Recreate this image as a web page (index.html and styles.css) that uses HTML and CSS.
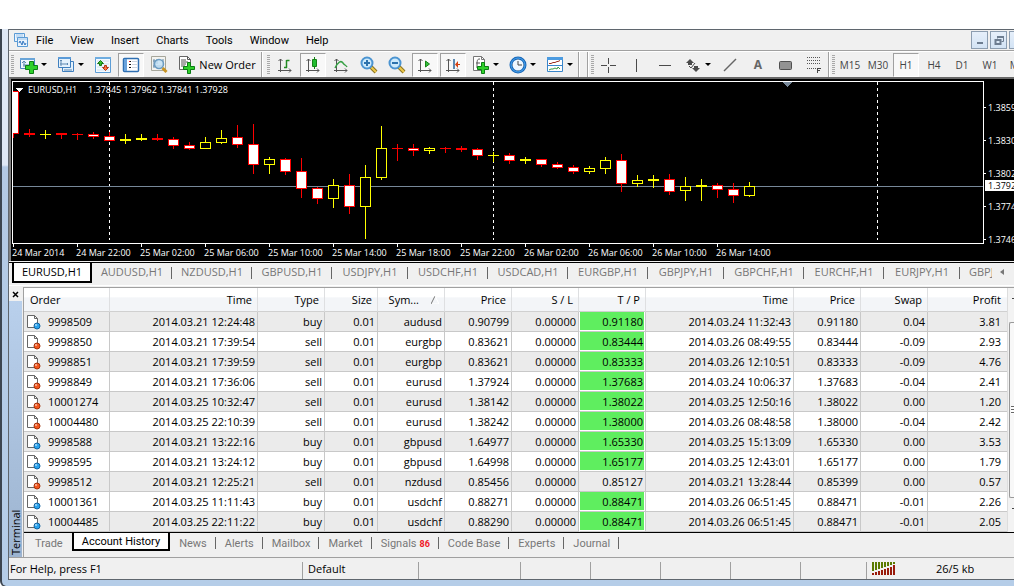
FILE: index.html
```html
<!DOCTYPE html>
<html lang="en">
<head>
<meta charset="utf-8">
<title>Trading terminal</title>
<link rel="stylesheet" href="styles.css">
</head>
<body>
<div class="window">
<div class="frame">
  <header class="menubar">
    <svg class="app-icon" width="16" height="16" viewBox="0 0 16 16"><g fill="#e9f3fd" stroke="#5b9bd5"><path d="M1.500 1.500h10v8h-10z"/><path d="M3 5h7M3 3h7" stroke="#9cc4ea"/><path d="M4.500 5.500h10v9h-10z"/><path d="M5 7h9" stroke="#9cc4ea"/><path d="M6 11l1-2 2 4 1-4 2 4 1-2" fill="none" stroke="#3577c0"/></g></svg>
    <nav class="menu">
      <button>File</button><button>View</button><button>Insert</button><button>Charts</button><button>Tools</button><button>Window</button><button>Help</button>
    </nav>
    <div class="winbtns">
      <button aria-label="Minimize"><svg width="16" height="16" viewBox="0 0 16 16"><path d="M5 10h6v2H5z" fill="#6d7d90"/></svg></button>
      <button aria-label="Restore"><svg width="16" height="16" viewBox="0 0 16 16"><path d="M6.500 6.500V4.500h6v5h-2" fill="none" stroke="#6d7d90"/><path d="M6 4h7v2H6z" fill="#6d7d90"/><path d="M4.500 8h5v4h-5z" fill="none" stroke="#6d7d90" stroke-width="2"/></svg></button>
      <button aria-label="Close" class="cut"></button>
    </div>
  </header>

  <div class="toolbar">
    <i class="grip"></i>
    <button class="drop" aria-label="New chart"><svg width="18" height="18" viewBox="1 0 18 18"><path d="M1.500 2.500h14v10h-14z" fill="#eef6fd" stroke="#4b86bd"/><path d="M1 2h15v2H1z" fill="#6aa5d8"/><path d="M5 5v6M3 7l2-2 2 2M4 9h7" stroke="#5c87b0" fill="none"/><path d="M10.500 5.500h4v4h4v4h-4v4h-4v-4h-4v-4h4z" fill="#2fd02a" stroke="#0b7d15"/></svg></button>
    <button class="drop" aria-label="Profiles"><svg width="18" height="18" viewBox="0 0 18 18"><g fill="#e4f1fc" stroke="#3f7fbe"><path d="M5.500 5.500h11v10h-11z"/><path d="M1.500 1.500h12v10h-12z"/></g><path d="M1 1h13v2H1z" fill="#5b9bd8"/><path d="M4 4v6M3 5l1-1 1 1M3 8h8M10 7l1 1-1 1M7 14h8" stroke="#5c87b0" fill="none"/></svg></button>
    <button aria-label="Market Watch"><svg width="16" height="16" viewBox="0 0 16 16"><path d="M.5.5h15v15H.5z" fill="#f4faff" stroke="#5c9dd6"/><path d="M0 0h16v2H0z" fill="#6fade0"/><path d="M2 4h12M2 7h12M2 10h12M2 13h12" stroke="#cfe0ee"/><path d="M5.500 3.500l3 3h-2v2h-2v-2h-2z" fill="#35c12c" stroke="#167514"/><path d="M10.500 13.500l-3-3h2v-2h2v2h2z" fill="#ff7542" stroke="#b33514"/></svg></button>
    <button class="on" aria-label="Navigator"><svg width="18" height="16" viewBox="0 0 18 16"><rect x="1.500" y="1.500" width="15" height="13" rx="1" fill="#fff" stroke="#2f6fb2" stroke-width="1.500"/><path d="M2 2h3v12H2z" fill="#69a2dc"/><path d="M7 4.500h2M7 7.500h2M7 10.500h2" stroke="#111"/><path d="M7 4.500h1" stroke="#e22"/><path d="M10 4.500h5M10 7.500h5M10 10.500h5" stroke="#ccd5df"/></svg></button>
    <button aria-label="Data Window"><svg width="18" height="18" viewBox="0 0 18 18"><path d="M1.500.5h14v14h-14z" fill="#f3f3f0" stroke="#a6a69b"/><path d="M4 3v9M3 5h3M7 3v5M13 3v7M3 10h10" stroke="#6689a6"/><circle cx="9" cy="8" r="4.500" fill="#c2e1f6" fill-opacity=".8" stroke="#6b9cc2" stroke-width="1.500"/><path d="M12.500 12l4 4" stroke="#c79322" stroke-width="3"/></svg></button>
    <button class="order"><svg width="18" height="18" viewBox="0 0 18 18"><path d="M1.500.5h8l3 3v10h-11z" fill="#fff" stroke="#666"/><path d="M9.500.5v3h3M3 4h5M3 6h7M3 8h5M3 10h4" stroke="#555" fill="none"/><path d="M9.500 6.500h3v4h4v3h-4v4h-3v-4h-4v-3h4z" fill="#2fd02a" stroke="#0b7d15"/></svg>New Order</button>
    <i class="sep"></i><i class="grip g2"></i>
    <button aria-label="Bar Chart"><svg width="16" height="16" viewBox="0 0 16 16"><path d="M3.500 2v13M1.500 4l2-2 2 2M1 13.500h13M12 11.500l2 2-2 2" stroke="#555" fill="none"/><path d="M9.500 3v8M9.500 3.500h3M7 10.500h3" stroke="#228a22" stroke-width="1.500" fill="none"/></svg></button>
    <button class="on" aria-label="Candlesticks"><svg width="16" height="16" viewBox="0 0 16 16"><path d="M3.500 2v13M1.500 4l2-2 2 2M1 13.500h13M12 11.500l2 2-2 2" stroke="#555" fill="none"/><path d="M9.500 0v12" stroke="#168316"/><path d="M7.500 2.500h4v7h-4z" fill="#21bd30" stroke="#168316"/></svg></button>
    <button aria-label="Line Chart"><svg width="16" height="16" viewBox="0 0 16 16"><path d="M3.500 2v13M1.500 4l2-2 2 2M1 13.500h13M12 11.500l2 2-2 2" stroke="#555" fill="none"/><path d="M2 11c3-6 6-8 8-5 1 2 3 2 4 4" stroke="#36a044" stroke-width="1.500" fill="none"/></svg></button>
    <button aria-label="Zoom In"><svg width="18" height="18" viewBox="0 0 18 18"><path d="M10 10l6 6" stroke="#8b7422" stroke-width="4"/><path d="M11 11l5 5" stroke="#efc94a" stroke-width="2"/><circle cx="7" cy="7" r="5.500" fill="#cdeafc" stroke="#4b94d1" stroke-width="2"/><path d="M4 7h6M7 4v6" stroke="#2c72ad" stroke-width="2"/></svg></button>
    <button aria-label="Zoom Out"><svg width="18" height="18" viewBox="0 0 18 18"><path d="M10 10l6 6" stroke="#8b7422" stroke-width="4"/><path d="M11 11l5 5" stroke="#efc94a" stroke-width="2"/><circle cx="7" cy="7" r="5.500" fill="#cdeafc" stroke="#4b94d1" stroke-width="2"/><path d="M4 7h6" stroke="#2c72ad" stroke-width="2"/></svg></button>
    <button class="on" aria-label="Auto Scroll"><svg width="16" height="16" viewBox="0 0 16 16"><path d="M3.500 2v13M1.500 4l2-2 2 2M1 13.500h13M12 11.500l2 2-2 2" stroke="#555" fill="none"/><path d="M8.500 4l4 3-4 3z" fill="#32bd3b" stroke="#168316"/></svg></button>
    <button class="on" aria-label="Chart Shift"><svg width="16" height="16" viewBox="0 0 16 16"><path d="M3.500 2v13M1.500 4l2-2 2 2M1 13.500h13M12 11.500l2 2-2 2" stroke="#555" fill="none"/><path d="M9 2v10" stroke="#2a6599" stroke-width="1.500"/><path d="M15 7.500h-4" stroke="#c33b0d"/><path d="M13 4v7l-3-3.500z" fill="#d8410f"/></svg></button>
    <button class="drop" aria-label="Indicators"><svg width="18" height="18" viewBox="0 0 18 18"><path d="M1.500.5h8l3 3v11h-11z" fill="#fff" stroke="#777"/><path d="M9.500.5v3h3" stroke="#777" fill="none"/><path d="M8 3c-3 0-3 1-3 9M4 7h4" stroke="#555" fill="none"/><path d="M9.500 6.500h3v4h4v3h-4v4h-3v-4h-4v-3h4z" fill="#2fd02a" stroke="#0b7d15"/></svg></button>
    <button class="drop" aria-label="Periods"><svg width="18" height="18" viewBox="0 0 18 18"><circle cx="9" cy="9" r="7" fill="#eef7ff" stroke="#1767b8" stroke-width="3"/><circle cx="9" cy="9" r="7" fill="none" stroke="#4ba4ee"/><path d="M9 5v4h4" stroke="#444" fill="none"/><path d="M9 3v1M9 14v1M3 9h1M14 9h1" stroke="#888"/></svg></button>
    <button class="drop" aria-label="Templates"><svg width="18" height="16" viewBox="0 0 18 16"><path d="M1.500.5h15v14h-15z" fill="#fff" stroke="#3a86ca"/><path d="M1 0h16v3H1z" fill="#4c9be0"/><path d="M2 8.500h14" stroke="#3a86ca"/><path d="M3 6.500h2l2-1h2l2-1h1l2-1" stroke="#9c3020" fill="none"/><path d="M3 13l2-1h2l2-1 2 1 1-2 2 2" stroke="#379a43" fill="none"/></svg></button>
    <i class="sep"></i><i class="sep s2"></i><i class="grip g3"></i>
    <button aria-label="Crosshair"><svg width="16" height="16" viewBox="0 0 16 16"><path d="M0 8.500h6M9 8.500h6M7.500 1v6M7.500 10v6" stroke="#4a4a4a"/></svg></button>
    <button aria-label="Vertical Line"><svg width="16" height="16" viewBox="0 0 16 16"><path d="M7.500 2v13" stroke="#4a4a4a"/></svg></button>
    <button aria-label="Horizontal Line"><svg width="16" height="16" viewBox="0 0 16 16"><path d="M2 8.500h12" stroke="#4a4a4a"/></svg></button>
    <button class="drop" aria-label="Arrows"><svg width="16" height="16" viewBox="0 0 16 16"><path d="M5 2l4 4H7v2H3V6H1zM11 15l-4-4h2V9h4v2h2z" fill="#4a4a4a"/><path d="M4 9l2 2 4-5" fill="none" stroke="#4a4a4a"/></svg></button>
    <button aria-label="Trendline"><svg width="16" height="16" viewBox="0 0 16 16"><path d="M2 14L14 2" stroke="#666" stroke-width="1.500"/></svg></button>
    <button class="letter" aria-label="Text">A</button>
    <button aria-label="Rectangle"><svg width="16" height="16" viewBox="0 0 16 16"><rect x="1.500" y="4.500" width="12" height="8" rx="1" fill="#929292" stroke="#505050"/></svg></button>
    <button aria-label="Fibonacci"><svg width="18" height="18" viewBox="0 0 18 18"><path d="M2 1.500h14M2 4.500h14M2 7.500h14M2 12.500h9" stroke="#555" stroke-dasharray="1 1"/><path d="M12.500 17v-5M12 12.500h4M12 14.500h3" stroke="#444" fill="none"/></svg></button>
    <i class="sep"></i><i class="grip g4"></i>
    <button>M15</button><button>M30</button><button class="on">H1</button><button>H4</button><button>D1</button><button>W1</button><button>MN</button>
  </div>

  <section class="chart">
    <div class="plot"><svg id="plot" width="100%" height="161"></svg></div>
    <svg class="prices" width="30" height="163" id="prices"></svg>
    <svg class="dates" width="100%" height="17" id="dates"></svg>
  </section>

  <div class="charttabs">
    <button class="active">EURUSD,H1</button><button>AUDUSD,H1</button><button>NZDUSD,H1</button><button>GBPUSD,H1</button><button class="narrow">USDJPY,H1</button><button>USDCHF,H1</button><button>USDCAD,H1</button><button>EURGBP,H1</button><button class="narrow">GBPJPY,H1</button><button>GBPCHF,H1</button><button>EURCHF,H1</button><button class="narrow">EURJPY,H1</button><button class="last">GBPJPY,H1</button>
    <button class="scroll" aria-label="Scroll tabs left"><svg width="4" height="6" viewBox="0 0 4 6"><path d="M4 0v6L0 3z" fill="#777"/></svg></button>
  </div>

  <section class="terminal">
    <div class="side">
      <button aria-label="Close terminal"><svg width="7" height="7" viewBox="0 0 7 7"><path d="M1 1l5 5M6 1L1 6" stroke="#000" stroke-width="1.500"/></svg></button>
      <div class="side-title">Terminal</div>
    </div>
    <div class="panel">
      <div class="grid">
        <table>
          <colgroup><col class="c86"><col class="c148"><col class="c67"><col class="c53"><col class="c67"><col class="c67"><col class="c67"><col class="c67"><col class="c148"><col class="c67"><col class="c67"><col></colgroup>
          <thead><tr><th>Order</th><th>Time</th><th>Type</th><th>Size</th><th class="sym">Sym...<svg width="8" height="8" viewBox="0 0 8 8"><path d="M0 8l4-8" stroke="#777"/><path d="M4 0l4 8H1" stroke="#fff" fill="none"/></svg></th><th>Price</th><th>S / L</th><th>T / P</th><th>Time</th><th>Price</th><th>Swap</th><th>Profit</th></tr></thead>
          <tbody id="history"></tbody>
        </table>
        <div class="scrollbar"><div class="arrow"></div><div class="thumb"><i></i></div><div class="arrow"></div></div>
      </div>
      <div class="tabs">
        <button class="first">Trade</button><button class="active">Account History</button><button>News</button><button>Alerts</button><button>Mailbox</button><button>Market</button><button>Signals<b>86</b></button><button>Code Base</button><button>Experts</button><button>Journal</button>
      </div>
    </div>
  </section>

  <footer class="status">
    <div class="help">For Help, press F1</div><div class="w116">Default</div><div class="w102"></div><div class="w70"></div><div class="w70"></div><div class="w70"></div><div class="w70"></div><div class="w66"></div>
    <div class="net"><svg width="24" height="13" viewBox="0 0 24 13"><path d="M1 0v9M4 0v8M7 0v7M10 0v6M13 0v5M16 0v4M19 0v3M22 0v2" stroke="#5a7a00" stroke-width="2"/><path d="M1 11v2M4 10v3M7 9v4M10 8v5M13 7v6M16 6v7M19 5v8M22 3v10" stroke="#991b0b" stroke-width="2"/></svg><span>26/5 kb</span></div>
  </footer>
</div>
</div>
<script src="app.js"></script>
</body>
</html>
```
FILE: styles.css
```css
* { box-sizing: border-box; }
body { margin: 0; background: #fff; font: 11px/14px "Open Sans", "Noto Sans", sans-serif; color: #000; overflow: hidden; }
button { font: inherit; color: inherit; background: none; border: 0; padding: 0; margin: 0; }
svg { display: block; flex: none; }

.window { margin: 29px 22px 0 0; padding: 0 0 6px 6px; border-left: 2px solid #3c4550; border-bottom: 1px solid #222; border-bottom-left-radius: 6px; background: linear-gradient(#dfe8f5 0, #dfe8f5 136px, #b3c9e4 138px, #b5cde8 100%); }
.frame { border-top: 1px solid #5f666e; border-left: 1px solid #5f666e; border-bottom: 1px solid #5f666e; background: #f0f0f0; overflow: hidden; }

.menubar { display: flex; align-items: center; height: 21px; padding-left: 4px; border-bottom: 1px solid #a0a0a0; }
.menu { display: flex; flex: 1; gap: 17px; padding: 1px 0 0 7px; font: 11px/14px Roboto, sans-serif; }
.winbtns { display: flex; gap: 2px; }
.winbtns button { width: 17px; height: 18px; border: 1px solid #8c9db0; background: linear-gradient(#e6effa, #d3e3f4); }
.winbtns .cut { width: 5px; border-right: 0; }

.toolbar { display: flex; align-items: center; height: 26px; border-top: 1px solid #fff; padding-left: 1px; overflow: hidden; color: #444; }
.toolbar button { flex: none; display: flex; align-items: center; justify-content: center; width: 28px; height: 24px; font: 10px/12px "Open Sans", sans-serif; }
.toolbar .on { width: 26px; margin: 0 1px; border: 1px solid #a0a0a0; border-right-color: #fff; border-bottom-color: #fff; background: #f8f8f8; }
.toolbar .drop { width: 37px; justify-content: flex-start; padding-left: 5px; gap: 3px; }
.drop svg { width: 18px; }
.drop::after { content: ""; border: 3px solid transparent; border-top-color: #000; border-bottom: 0; }
.toolbar .order { width: 88px; gap: 3px; color: #000; font: 11px/14px "Open Sans", sans-serif; }
.toolbar .letter { font: bold 12px/14px "Noto Sans", sans-serif; color: #666; }
.grip { flex: none; width: 3px; height: 20px; margin: 0 1px; background: repeating-linear-gradient(#a8a8a8 0 1px, transparent 1px 2px); }
.sep { flex: none; width: 2px; height: 26px; border-left: 1px solid #a0a0a0; border-right: 1px solid #fff; }
.g2 { margin: 0 1px 0 4px; }
.s2 { margin-left: 7px; }
.g3, .g4 { margin: 0 1px 0 2px; }

.chart { display: grid; grid-template-columns: minmax(0, 1fr) 30px; height: 184px; background: #000; border-top: 2px solid #696969; border-left: 2px solid #808080; padding: 2px 0 0 1px; }
.plot { height: 163px; border: 1px solid #fff; }
.dates { grid-column: 1 / 3; }
.chart svg { shape-rendering: crispEdges; overflow: hidden; }
.chart text { fill: #fff; font: 9px "Open Sans", sans-serif; }
.chart .now { fill: #000; }
.up { fill: #ff0; }
.down { fill: #f00; }
.up-body { fill: #000; }
.down-body { fill: #fff; }

.charttabs { display: flex; height: 24px; border-top: 1px solid #000; margin-top: 1px; color: #777; overflow: hidden; padding-left: 3px; align-items: flex-start; border-bottom: 1px solid #fff; }
.charttabs button { position: relative; flex: none; width: 80px; height: 18px; }
.charttabs .narrow { width: 76px; }
.charttabs .active { height: 20px; background: #fff; border: 2px solid #000; border-top: 0; color: #000; }
.charttabs button + button:not(.last):not(.scroll)::after { content: ""; position: absolute; right: 0; top: 4px; height: 12px; border-right: 1px solid #666; }
.charttabs .last { width: 32px; padding-left: 9px; overflow: hidden; text-align: left; }
.charttabs .scroll { display: flex; justify-content: center; align-items: center; width: 20px; }

.terminal { display: flex; padding-top: 1px; }
.side { display: flex; flex-direction: column; width: 13px; margin-right: 1px; }
.side button { display: flex; align-items: center; justify-content: center; height: 14px; }
.side-title { flex: 1; writing-mode: vertical-rl; transform: rotate(180deg); background: linear-gradient(#9db4d0, #b9d0ec); font: 11px/13px "Open Sans", sans-serif; padding-top: 2px; }
.panel { flex: 1; min-width: 0; border-left: 1px solid #a0a0a0; }
.grid { display: flex; border-top: 1px solid #a0a0a0; border-bottom: 1px solid #000; }
table { flex: 1; table-layout: fixed; border-collapse: separate; border-spacing: 0; width: 100%; }
.c86 { width: 86px; } .c148 { width: 148px; } .c67 { width: 67px; } .c53 { width: 53px; }
th { height: 24px; padding: 0 5px 0 0; font-weight: normal; text-align: right; border-right: 1px solid #dedfe1; border-bottom: 1px solid #d0d0d0; background: linear-gradient(#fff 0, #fff 40%, #f3f5f8 42%, #f3f5f8 100%); }
th:first-child { text-align: left; padding-left: 6px; }
.sym svg { display: inline-block; margin-left: 12px; }
td { height: 20px; padding: 0 2px 0 0; line-height: 14px; text-align: right; border-right: 1px solid #c8c8c8; border-bottom: 1px solid #c8c8c8; white-space: nowrap; background: #fff; }
tr:nth-child(odd) td { background: #ebebeb; }
td:last-child, th:last-child { border-right: 0; padding-right: 6px; }
.id { display: flex; align-items: center; gap: 7px; padding-left: 2px; height: 19px; }
tbody tr:nth-child(n) .hit { background: #5fee5f; border-left: 1px solid #fff; box-shadow: inset -1px -1px #fff; }
.scrollbar { display: flex; flex-direction: column; width: 7px; background: #f3f3f3; border-left: 1px solid #ddd; padding-left: 1px; }
.arrow { height: 34px; display: flex; align-items: flex-start; justify-content: flex-end; padding-top: 10px; }
.arrow::after { content: ""; width: 2px; height: 1px; background: #444; }
.thumb { flex: 1; display: flex; align-items: center; justify-content: flex-end; border: 1px solid #999; border-right: 0; border-radius: 2px 0 0 2px; background: #f8f8f8; }
.thumb i { width: 3px; height: 8px; background: repeating-linear-gradient(#666 0 1px, #fff 1px 3px); }

.tabs { display: flex; align-items: flex-start; height: 24px; padding-left: 2px; color: #777; font: 11px/14px Roboto, sans-serif; }
.tabs button { position: relative; padding: 1px 9px 0; height: 20px; }
.tabs .active { color: #000; background: #fff; border: 2px solid #000; border-top: 0; height: 18px; padding: 1px 8px 0; }
.tabs .active ~ button::after { content: ""; position: absolute; right: 0; top: 4px; height: 12px; border-right: 1px solid #666; }
.tabs b { color: #f01828; font-size: 9px; line-height: 9px; margin-left: 3px; }

.status { display: flex; height: 22px; border-top: 1px solid #a0a0a0; align-items: flex-end; }
.status > div { flex: none; height: 17px; border-left: 1px solid #a0a0a0; padding: 0 0 0 5px; }
.status .help { flex: 1; border: 0; padding-left: 1px; }
.status .w116 { width: 116px; } .status .w102 { width: 102px; } .status .w70 { width: 70px; } .status .w66 { width: 66px; }
.status .net { display: flex; width: 148px; gap: 40px; }
```
FILE: app.js
```js
// Each candle: wick top, body top, body bottom, wick bottom, 1 = rising.
const candles = [
  [91,91,134,138,0],[129,133,135,137,0],[130,134,135,139,1],[133,133,135,139,0],[133,134,135,140,0],
  [132,134,137,139,0],[132,136,141,141,0],[134,139,141,144,1],[134,138,140,141,1],[134,138,140,141,0],
  [137,139,146,149,0],[142,145,149,150,0],[137,142,149,149,1],[130,138,143,144,1],[125,137,145,148,0],
  [124,144,165,174,0],[157,159,165,174,1],[158,159,172,175,0],[158,171,189,198,0],[187,188,199,204,0],
  [179,185,199,208,1],[174,185,207,214,0],[165,177,207,239,1],[126,148,178,180,1],[144,148,149,161,0],
  [144,148,151,156,0],[147,148,151,154,1],[147,148,149,153,0],[146,148,150,152,0],[148,149,156,160,0],
  [152,155,156,162,1],[153,155,161,164,0],[157,159,161,164,1],[159,159,165,167,0],[162,164,168,169,0],
  [165,167,172,174,0],[166,168,172,174,1],[157,160,169,174,1],[154,160,184,192,0],[175,180,184,187,1],
  [175,179,181,188,1],[174,179,192,195,0],[177,186,191,201,1],[179,185,187,201,1],[183,185,190,198,0],
  [183,189,196,203,0],[182,186,196,197,1]
];
const TOP = 82;
const rect = (x, y, w, h, c) => `<rect x="${x}" y="${y}" width="${w}" height="${h}" class="${c}"/>`;
let art = '';
for (const x of [96, 480, 864]) art += `<line x1="${x}" x2="${x}" y1="0" y2="158" stroke="#fff" stroke-dasharray="3 3" transform="translate(.5)"/>`;
art += '<rect x="0" y="104" width="100%" height="1" fill="#778899"/>';
candles.forEach(([wt, bt, bb, wb, rising], i) => {
  const x = 16 * i, kind = rising ? 'up' : 'down';
  art += rect(x, wt - TOP, 1, wb - wt, kind) + rect(x - 5, bt - TOP, 11, bb - bt, kind);
  if (bb - bt > 2) art += rect(x - 4, bt - TOP + 1, 9, bb - bt - 2, kind + '-body');
});
art += '<path d="M769 0h10l-5 5z" fill="#778899"/><path d="M2 6h8l-4 4z" fill="#fff"/>';
art += '<text x="15" y="11">EURUSD,H1</text><text x="75" y="11">1.37845 1.37962 1.37841 1.37928</text>';
document.getElementById('plot').innerHTML = art;

document.getElementById('prices').innerHTML =
  ['1.38590', '1.38305', '1.38020', '1.37740', '1.37460'].map((p, i) =>
    `<rect x="0" y="${26 + 33 * i}" width="2" height="1" fill="#fff"/><text x="4" y="${30 + 33 * i}">${p}</text>`).join('') +
  '<rect x="1" y="99" width="30" height="11" fill="#fff"/><text class="now" x="4" y="108">1.37928</text>';

document.getElementById('dates').innerHTML =
  ['24 Mar 2014', '24 Mar 22:00', '25 Mar 02:00', '25 Mar 06:00', '25 Mar 10:00', '25 Mar 14:00', '25 Mar 18:00', '25 Mar 22:00', '26 Mar 02:00', '26 Mar 06:00', '26 Mar 10:00', '26 Mar 14:00']
    .map((d, i) => `<rect x="${1 + 64 * i}" y="0" width="1" height="3" fill="#fff"/><text x="${64 * i}" y="12">${d}</text>`).join('');

const history = `9998509|2014.03.21 12:24:48|buy|0.01|audusd|0.90799|0.00000|0.91180|2014.03.24 11:32:43|0.91180|0.04|3.81
9998850|2014.03.21 17:39:54|sell|0.01|eurgbp|0.83621|0.00000|0.83444|2014.03.26 08:49:55|0.83444|-0.09|2.93
9998851|2014.03.21 17:39:59|sell|0.01|eurgbp|0.83621|0.00000|0.83333|2014.03.26 12:10:51|0.83333|-0.09|4.76
9998849|2014.03.21 17:36:06|sell|0.01|eurusd|1.37924|0.00000|1.37683|2014.03.24 10:06:37|1.37683|-0.04|2.41
10001274|2014.03.25 10:32:47|sell|0.01|eurusd|1.38142|0.00000|1.38022|2014.03.25 12:50:16|1.38022|0.00|1.20
10004480|2014.03.25 22:10:39|sell|0.01|eurusd|1.38242|0.00000|1.38000|2014.03.26 08:48:58|1.38000|-0.04|2.42
9998588|2014.03.21 13:22:16|buy|0.01|gbpusd|1.64977|0.00000|1.65330|2014.03.25 15:13:09|1.65330|0.00|3.53
9998595|2014.03.21 13:24:12|buy|0.01|gbpusd|1.64998|0.00000|1.65177|2014.03.25 12:43:01|1.65177|0.00|1.79
9998512|2014.03.21 12:25:21|sell|0.01|nzdusd|0.85456|0.00000|0.85127|2014.03.21 13:28:44|0.85399|0.00|0.57
10001361|2014.03.25 11:11:43|buy|0.01|usdchf|0.88271|0.00000|0.88471|2014.03.26 06:51:45|0.88471|-0.01|2.26
10004485|2014.03.25 22:11:22|buy|0.01|usdchf|0.88290|0.00000|0.88471|2014.03.26 06:51:45|0.88471|-0.01|2.05`;
const icon = type => {
  const c = type === 'buy' ? ['#2aa3ee', '#12639f'] : ['#f2561d', '#a33108'];
  return `<svg width="15" height="16" viewBox="0 0 15 16"><path d="M1.500 1.500h7l3 3v9h-10z" fill="#fff" stroke="#666"/><path d="M8.500 1.500v3h3" fill="none" stroke="#666"/><circle cx="11" cy="12" r="3" fill="${c[0]}" stroke="${c[1]}"/><circle cx="10" cy="11" r="1" fill="#fff" fill-opacity=".6"/></svg>`;
};
document.getElementById('history').innerHTML = history.split('\n').map(line => {
  const f = line.split('|');
  return '<tr>' + f.map((v, i) => {
    if (i === 0) return `<td><div class="id">${icon(f[2])}${v}</div></td>`;
    // The take-profit cell lights up when the order closed at that price.
    return `<td${i === 7 && v === f[9] ? ' class="hit"' : ''}>${v}</td>`;
  }).join('') + '</tr>';
}).join('');
```
